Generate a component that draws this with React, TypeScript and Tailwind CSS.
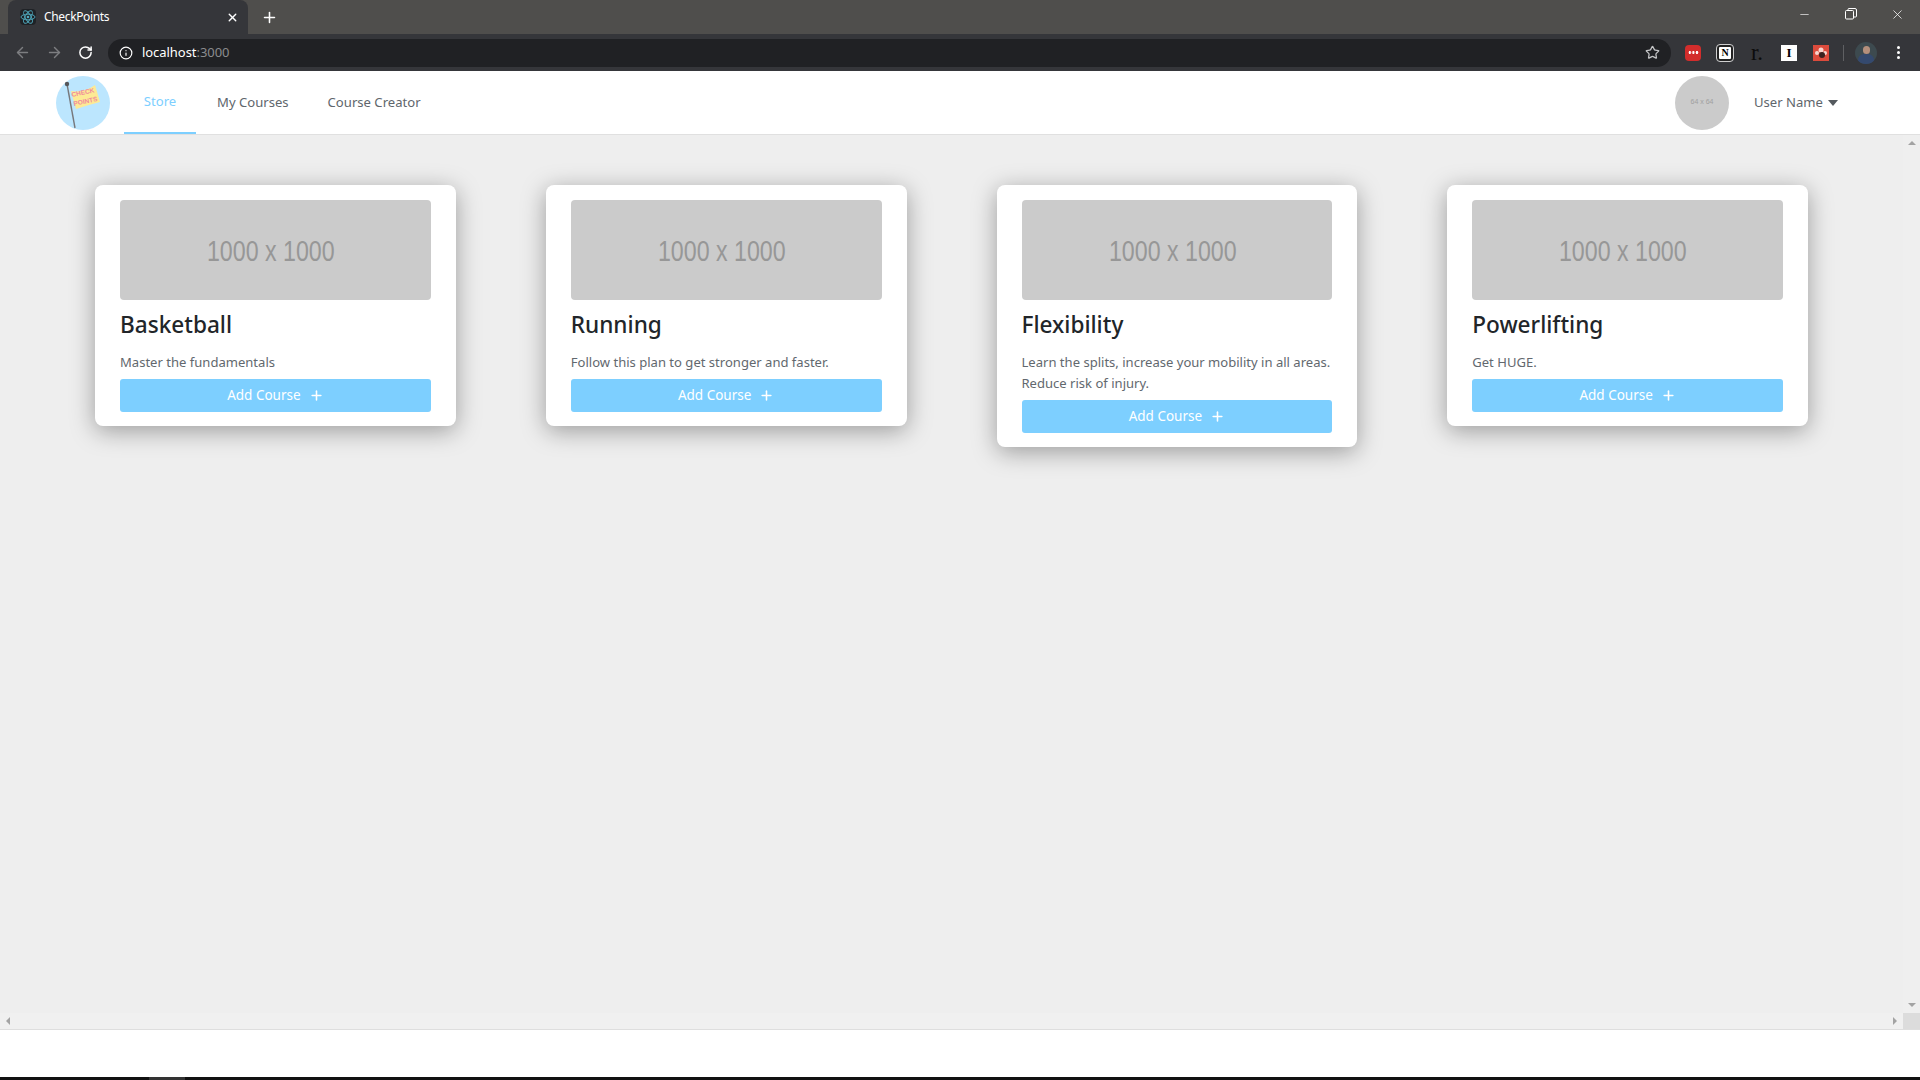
/**
 * CheckPoints store page inside a Chrome window
 * Contains: browser chrome, nav bar, course cards, scrollbars
 */
import React from 'react';
import { ArrowLeft, ArrowRight, RotateCw, Info, Star, Plus, X, Minus } from 'lucide-react';

const courses = [
  { title: 'Basketball', text: 'Master the fundamentals' },
  { title: 'Running', text: 'Follow this plan to get stronger and faster.' },
  { title: 'Flexibility', text: 'Learn the splits, increase your mobility in all areas. Reduce risk of injury.' },
  { title: 'Powerlifting', text: 'Get HUGE.' },
];

const ReactIcon = () => (
  <svg viewBox="0 0 16 16" className="w-4 h-4" fill="none" stroke="#4fa9bd" strokeWidth="0.9">
    <ellipse cx="8" cy="8" rx="7" ry="2.8" />
    <ellipse cx="8" cy="8" rx="7" ry="2.8" transform="rotate(60 8 8)" />
    <ellipse cx="8" cy="8" rx="7" ry="2.8" transform="rotate(120 8 8)" />
    <circle cx="8" cy="8" r="1.3" fill="#4fa9bd" stroke="none" />
  </svg>
);

const RestoreIcon = () => (
  <svg viewBox="0 0 12 12" className="w-3 h-3" fill="none" stroke="#fff" strokeWidth="1">
    <rect x="0.5" y="2.5" width="8" height="8.5" rx="1" />
    <path d="M3 2.5V1.5a1 1 0 0 1 1-1h6a1.5 1.5 0 0 1 1.5 1.5v6a1 1 0 0 1-1 1H8.5" />
  </svg>
);

const Logo = () => (
  <svg viewBox="0 0 54 54" className="w-[54px] h-[54px]">
    <circle cx="27" cy="27" r="27" fill="#bce6fe" />
    <path d="M11 8 L19 52" stroke="#77787c" strokeWidth="1.4" />
    <circle cx="11" cy="8" r="2.2" fill="#55565a" />
    <path d="M15 15 Q28 17 39 9 L44 26 Q32 29 20 33 Z" fill="#fdea95" />
    <text x="16" y="21" fontSize="6.5" fontWeight="700" fill="#f08a9c" fontFamily="Liberation Sans, sans-serif" transform="rotate(-12 16 21)">
      CHECK
    </text>
    <text x="18" y="30" fontSize="6.5" fontWeight="700" fill="#f08a9c" fontFamily="Liberation Sans, sans-serif" transform="rotate(-12 18 30)">
      POINTS
    </text>
  </svg>
);

const BrowserChrome = () => (
  <div className="font-['Noto_Sans',sans-serif]">
    {/* Tab strip */}
    <div className="h-[34px] bg-[#4f4e4c] flex items-end pl-2 relative">
      <div className="w-[240px] h-[34px] bg-[#35363a] rounded-t-lg flex items-center pl-[12px] pr-[9px]">
        <div className="w-4 h-4 bg-[#1f2226] rounded-sm flex items-center justify-center">
          <ReactIcon />
        </div>
        <span className="ml-[8px] text-white text-[12px] tracking-[-0.35px] flex-1">CheckPoints</span>
        <X className="w-[13px] h-[13px] text-white" strokeWidth={2.5} />
      </div>
      <Plus className="w-[17px] h-[17px] text-white ml-[13px] mb-[8px]" strokeWidth={2.2} />
      <div className="ml-auto flex items-center h-[28px] self-start text-white">
        <Minus className="w-[13px] h-[13px]" strokeWidth={1.2} />
        <div className="ml-[34px]">
          <RestoreIcon />
        </div>
        <X className="w-[15px] h-[15px] ml-[33px] mr-[15px]" strokeWidth={1.2} />
      </div>
    </div>

    {/* Toolbar */}
    <div className="h-[37px] bg-[#35363a] flex items-center pl-[14px]">
      <ArrowLeft className="w-[17px] h-[17px] text-[#7d7e81]" strokeWidth={2} />
      <ArrowRight className="w-[17px] h-[17px] text-[#7d7e81] ml-[15px]" strokeWidth={2} />
      <RotateCw className="w-[15px] h-[15px] text-white ml-[15px]" strokeWidth={2.4} />
      <div className="w-[1563px] h-[28px] ml-[15px] bg-[#202124] rounded-full flex items-center pl-[11px] pr-[11px]">
        <Info className="w-[14px] h-[14px] text-white" strokeWidth={2} />
        <span className="ml-[9px] text-[13px] text-white tracking-[-0.05px]">
          localhost<span className="text-[#8b8c8e]">:3000</span>
        </span>
        <Star className="w-[15px] h-[15px] text-[#c4c5c7] ml-auto" strokeWidth={2} />
      </div>
      {/* Extensions */}
      <div className="ml-[14px] w-4 h-4 bg-[#d32d2c] rounded-sm flex items-center justify-center">
        <span className="w-[11px] h-[3px] bg-[radial-gradient(circle,#fff_1.2px,transparent_1.4px)] bg-[length:3.6px_3px]" />
      </div>
      <div className="ml-[16px] w-4 h-4 bg-white border-2 border-[#222] outline outline-1 outline-[#cfcfcf] rounded-[3px] flex items-center justify-center text-[10px] leading-none font-bold text-black font-['Liberation_Serif',serif]">
        N
      </div>
      <div className="ml-[16px] w-4 h-4 flex items-center justify-center text-[23px] leading-none text-[#0c0c0c] font-['Liberation_Serif',serif]">
        r.
      </div>
      <div className="ml-[16px] w-4 h-4 bg-white flex items-center justify-center text-[13px] leading-none font-bold text-black font-['Liberation_Serif',serif]">
        I
      </div>
      <div className="ml-[16px] w-4 h-4 bg-[#dc4b3c] flex items-center justify-center">
        <svg viewBox="0 0 16 16" className="w-4 h-4">
          <circle cx="8" cy="5" r="2.5" fill="#f7d6cf" />
          <circle cx="4" cy="8" r="2" fill="#f7d6cf" />
          <circle cx="12" cy="8" r="2" fill="#f7d6cf" />
          <circle cx="9" cy="10" r="3" fill="#3a2220" />
        </svg>
      </div>
      <div className="ml-[14px] w-px h-4 bg-[#5f6063]" />
      <div className="ml-[11px] w-[22px] h-[22px] rounded-full bg-[#3d4a4f] overflow-hidden flex flex-col items-center">
        <span className="mt-[4px] w-[7px] h-[8px] rounded-full bg-[#b48f7c]" />
        <span className="w-[16px] h-[10px] rounded-t-md bg-[#34496e]" />
      </div>
      <div className="ml-[20px] flex flex-col gap-[2px]">
        <span className="w-[3px] h-[3px] rounded-full bg-white" />
        <span className="w-[3px] h-[3px] rounded-full bg-white" />
        <span className="w-[3px] h-[3px] rounded-full bg-white" />
      </div>
    </div>
  </div>
);

const NavBar = () => (
  <nav className="h-[64px] bg-white border-b border-[#e0e0e0] flex pl-[56px] pr-[82px] text-[13.1px] text-[#60666c] font-['Noto_Sans',sans-serif]">
    <div className="mt-[5px]">
      <Logo />
    </div>
    <a className="ml-[14px] w-[72px] h-[63px] border-b-[2px] border-[#7dcfff] text-[#7dcfff] flex items-center justify-center">
      Store
    </a>
    <a className="ml-[21px] h-[63px] flex items-center">My Courses</a>
    <a className="ml-[39px] h-[63px] flex items-center">Course Creator</a>
    <div className="ml-auto flex items-center h-[63px]">
      <div className="w-[54px] h-[54px] rounded-full bg-[#cbcbcb] flex items-center justify-center text-[7px] text-[#a0a0a0] font-['Liberation_Sans',sans-serif]">
        64 x 64
      </div>
      <span className="ml-[25px]">User Name</span>
      <span className="ml-[5px] w-0 h-0 border-x-[5px] border-x-transparent border-t-[6px] border-t-[#54595e]" />
    </div>
  </nav>
);

const CourseCard = ({ title, text }: { title: string; text: string }) => (
  <div className="bg-white rounded-[8px] px-[25px] pt-[15px] pb-[14px] shadow-[0_5px_25px_rgba(0,0,0,0.35)] flex flex-col self-start">
    <div className="h-[100px] bg-[#cbcbcb] rounded-[4px] flex items-center justify-center pr-[9px] pt-[2px]">
      <span className="text-[29px] leading-none text-[#979797] scale-x-[0.8] whitespace-nowrap font-['Liberation_Sans',sans-serif]">
        1000 x 1000
      </span>
    </div>
    <h3 className="mt-[9px] text-[22.6px] leading-[32px] font-medium text-[#212529]">{title}</h3>
    <p className="mt-[11px] mb-[6px] text-[13.05px] leading-[21px] text-[#62686e]">{text}</p>
    <button className="h-[33px] bg-[#7dcfff] rounded-[3px] text-white text-[13.5px] flex items-center justify-center gap-[8px]">
      Add Course
      <Plus className="w-[15px] h-[15px]" strokeWidth={2.5} />
    </button>
  </div>
);

const Scrollbars = {
  Vertical: () => (
    <div className="w-[17px] bg-[#efefef] flex flex-col items-center justify-between py-[6px]">
      <span className="w-0 h-0 border-x-[4px] border-x-transparent border-b-[4px] border-b-[#a3a3a3]" />
      <span className="w-0 h-0 border-x-[4px] border-x-transparent border-t-[4px] border-t-[#a3a3a3]" />
    </div>
  ),
  Horizontal: () => (
    <div className="h-[17px] bg-[#f0f0f0] border-b border-[#dedede] flex">
      <div className="flex-1 flex items-center justify-between px-[6px]">
        <span className="w-0 h-0 border-y-[4px] border-y-transparent border-r-[4px] border-r-[#a3a3a3]" />
        <span className="w-0 h-0 border-y-[4px] border-y-transparent border-l-[4px] border-l-[#a3a3a3]" />
      </div>
      <div className="w-[17px] bg-[#dcdcdc]" />
    </div>
  ),
};

const App: React.FC = () => {
  return (
    <div className="w-[1920px] h-[1080px] overflow-hidden flex flex-col bg-white font-['Noto_Sans',sans-serif]">
      <BrowserChrome />
      <NavBar />

      {/* Page content */}
      <div className="h-[878px] flex bg-[#eeeeee]">
        <main className="flex-1 px-[95px] pt-[50px] grid grid-cols-4 gap-x-[90px] content-start">
          {courses.map((course) => (
            <CourseCard key={course.title} {...course} />
          ))}
        </main>
        <Scrollbars.Vertical />
      </div>
      <Scrollbars.Horizontal />

      {/* Blank strip and window edge */}
      <div className="flex-1 bg-white" />
      <div className="h-[3px] bg-[#111] flex">
        <div className="ml-[149px] w-[36px] bg-[#333]" />
      </div>
    </div>
  );
};

export default App;
